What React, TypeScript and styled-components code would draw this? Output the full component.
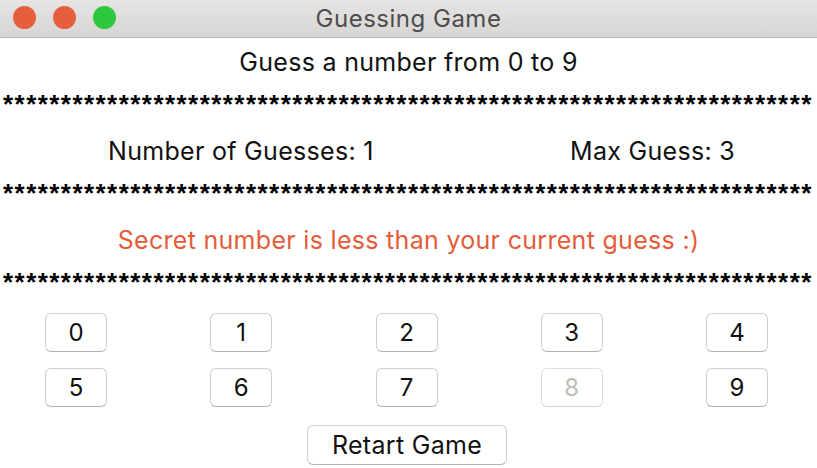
import React from "react";
import styled, { createGlobalStyle } from "styled-components";

const Global = createGlobalStyle`
  html, body { margin: 0; padding: 0; background: #ffffff; }
  body { width: 817px; height: 468px; overflow: hidden; font-family: Inter, "Liberation Sans", sans-serif; }
`;

const Window = styled.div`
  width: 817px;
  height: 468px;
  display: flex;
  flex-direction: column;
  background: #ffffff;
  overflow: hidden;
`;

const TitleBar = styled.div`
  height: 37px;
  flex: none;
  position: relative;
  display: flex;
  align-items: center;
  justify-content: center;
  background: linear-gradient(#e6e4e3, #d8d6d5);
  border-bottom: 1px solid #b5b3b2;
`;

const Lights = styled.div`
  position: absolute;
  left: 13px;
  top: 6px;
  display: flex;
  gap: 17px;
`;

const Light = styled.span<{ $c: string }>`
  width: 23px;
  height: 23px;
  border-radius: 50%;
  background: ${(p) => p.$c};
`;

const Title = styled.div`
  font-family: Inter, "Liberation Sans", sans-serif;
  font-size: 24px;
  color: #4d4d4d;
  letter-spacing: 0.5px;
`;

const TextRow = styled.div<{ $first?: boolean }>`
  flex: none;
  height: ${(p) => (p.$first ? "52px" : "67px")};
  padding-top: ${(p) => (p.$first ? "10px" : "25px")};
  box-sizing: border-box;
  line-height: 28px;
  font-size: 25px;
  letter-spacing: 0.3px;
  color: #111;
  text-align: center;
`;

const CountsRow = styled(TextRow)`
  display: flex;
  justify-content: space-between;
  padding-left: 108px;
  padding-right: 82px;
`;

const Message = styled(TextRow)`
  color: #e45c39;
`;

const Stars = styled.div`
  flex: none;
  height: 22px;
  padding-left: 3px;
  white-space: nowrap;
  font-family: "Liberation Sans", Arial, sans-serif;
  font-weight: bold;
  font-size: 26px;
  letter-spacing: 1.45px;
  color: #000;
  display: flex;
  align-items: center;
`;

const StarText = styled.span`
  display: block;
  line-height: 26px;
  transform: translateY(3px);
`;

const Pad = styled.div`
  display: grid;
  grid-template-columns: repeat(5, 62px);
  justify-content: space-between;
  row-gap: 16px;
  padding: 23px 49px 0 45px;
`;

const Key = styled.button<{ $off?: boolean }>`
  height: 39px;
  width: 62px;
  box-sizing: border-box;
  background: #fff;
  border: 1px solid ${(p) => (p.$off ? "#dedede" : "#cfcfcf")};
  border-bottom-color: ${(p) => (p.$off ? "#d2d2d2" : "#b4b4b4")};
  border-radius: 6px;
  font-family: Inter, "Liberation Sans", sans-serif;
  font-size: 24px;
  color: ${(p) => (p.$off ? "#bdbdbd" : "#111")};
  padding: 0;
  display: flex;
  align-items: center;
  justify-content: center;
`;

const RestartWrap = styled.div`
  display: flex;
  justify-content: center;
  padding-top: 18px;
  padding-right: 3px;
`;

const Restart = styled(Key)`
  width: 200px;
  height: 40px;
  font-size: 25px;
  letter-spacing: 0.3px;
`;

const starText = "*".repeat(70);

export default function App() {
  const digits = [0, 1, 2, 3, 4, 5, 6, 7, 8, 9];
  return (
    <Window>
      <Global />
      <TitleBar>
        <Lights>
          <Light $c="#e65f3c" />
          <Light $c="#e65f3c" />
          <Light $c="#2dc840" />
        </Lights>
        <Title>Guessing Game</Title>
      </TitleBar>
      <TextRow $first>Guess a number from 0 to 9</TextRow>
      <Stars><StarText>{starText}</StarText></Stars>
      <CountsRow>
        <span>Number of Guesses: 1</span>
        <span>Max Guess: 3</span>
      </CountsRow>
      <Stars><StarText>{starText}</StarText></Stars>
      <Message>Secret number is less than your current guess :)</Message>
      <Stars><StarText>{starText}</StarText></Stars>
      <Pad>
        {digits.map((d) => (
          <Key key={d} $off={d === 8}>{d}</Key>
        ))}
      </Pad>
      <RestartWrap>
        <Restart>Retart Game</Restart>
      </RestartWrap>
    </Window>
  );
}
